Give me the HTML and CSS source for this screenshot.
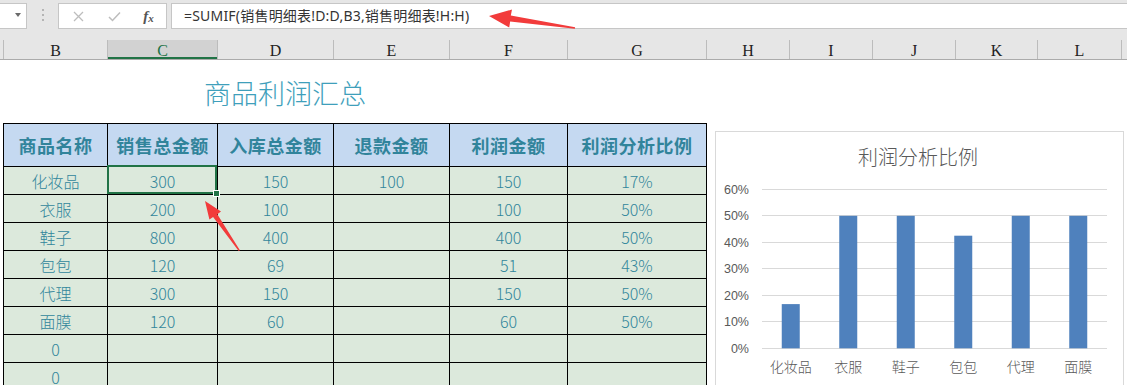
FILE: index.html
```html
<!DOCTYPE html>
<html lang="zh">
<head>
<meta charset="utf-8">
<title>商品利润汇总</title>
<link rel="stylesheet" href="styles.css">
</head>
<body>
<div class="app">
  <div class="fbar">
    <div class="namebox"><span class="caret"></span></div>
    <div class="grip">
      <svg width="4" height="14" viewBox="0 0 4 14"><rect x="1" y="1" width="2" height="2" fill="#b4b4b4"/><rect x="1" y="6" width="2" height="2" fill="#b4b4b4"/><rect x="1" y="11" width="2" height="2" fill="#b4b4b4"/></svg>
    </div>
    <div class="fbtns">
      <span class="fbtn"><svg width="11" height="11" viewBox="0 0 11 11"><path d="M1 1L10 10M10 1L1 10" stroke="#bdbdbd" stroke-width="1.3" fill="none"/></svg></span>
      <span class="fbtn"><svg width="13" height="11" viewBox="0 0 13 11"><path d="M1 6L4.5 9.5L12 1.5" stroke="#bdbdbd" stroke-width="1.5" fill="none"/></svg></span>
      <span class="fbtn fx"><i>f</i><span class="fxx">x</span></span>
    </div>
    <div class="finput">=SUMIF(销售明细表!D:D,B3,销售明细表!H:H)</div>
  </div>

  <div class="colhdr">
    <div class="ch ch0"></div>
    <div class="ch">B</div>
    <div class="ch active">C</div>
    <div class="ch">D</div>
    <div class="ch">E</div>
    <div class="ch">F</div>
    <div class="ch">G</div>
    <div class="ch">H</div>
    <div class="ch">I</div>
    <div class="ch">J</div>
    <div class="ch">K</div>
    <div class="ch">L</div>
    <div class="ch"></div>
  </div>

  <div class="sheet">
    <div class="titlerow"><div class="title">商品利润汇总</div></div>
    <div class="content">
      <table class="summary">
        <colgroup>
          <col class="cb"><col class="cc"><col class="cd"><col class="ce"><col class="cf"><col class="cg">
        </colgroup>
        <tr class="hrow"><th>商品名称</th><th>销售总金额</th><th>入库总金额</th><th>退款金额</th><th>利润金额</th><th>利润分析比例</th></tr>
        <tr class="drow"><td>化妆品</td><td class="sel">300</td><td>150</td><td>100</td><td>150</td><td>17%</td></tr>
        <tr class="drow"><td>衣服</td><td>200</td><td>100</td><td></td><td>100</td><td>50%</td></tr>
        <tr class="drow"><td>鞋子</td><td>800</td><td>400</td><td></td><td>400</td><td>50%</td></tr>
        <tr class="drow"><td>包包</td><td>120</td><td>69</td><td></td><td>51</td><td>43%</td></tr>
        <tr class="drow"><td>代理</td><td>300</td><td>150</td><td></td><td>150</td><td>50%</td></tr>
        <tr class="drow"><td>面膜</td><td>120</td><td>60</td><td></td><td>60</td><td>50%</td></tr>
        <tr class="drow"><td>0</td><td></td><td></td><td></td><td></td><td></td></tr>
        <tr class="drow"><td>0</td><td></td><td></td><td></td><td></td><td></td></tr>
      </table>

      <div class="chart">
        <svg width="407" height="268" viewBox="0 0 407 268">
          <text class="ctitle" x="202" y="33" text-anchor="middle">利润分析比例</text>
          <g class="grid">
            <line x1="46" x2="391" y1="57.5" y2="57.5"/>
            <line x1="46" x2="391" y1="83.5" y2="83.5"/>
            <line x1="46" x2="391" y1="110.5" y2="110.5"/>
            <line x1="46" x2="391" y1="136.5" y2="136.5"/>
            <line x1="46" x2="391" y1="163.5" y2="163.5"/>
            <line x1="46" x2="391" y1="189.5" y2="189.5"/>
            <line x1="46" x2="391" y1="216.5" y2="216.5"/>
          </g>
          <g class="ylab">
            <text x="33" y="62">60%</text>
            <text x="33" y="88">50%</text>
            <text x="33" y="115">40%</text>
            <text x="33" y="141">30%</text>
            <text x="33" y="168">20%</text>
            <text x="33" y="194">10%</text>
            <text x="33" y="221">0%</text>
          </g>
          <g class="bars">
            <rect x="65.75" y="172.1" width="18" height="44.2"/>
            <rect x="123.25" y="83.8" width="18" height="132.5"/>
            <rect x="180.75" y="83.8" width="18" height="132.5"/>
            <rect x="238.25" y="103.7" width="18" height="112.6"/>
            <rect x="295.75" y="83.8" width="18" height="132.5"/>
            <rect x="353.25" y="83.8" width="18" height="132.5"/>
          </g>
          <g class="xlab">
            <text x="74.75" y="240">化妆品</text>
            <text x="132.25" y="240">衣服</text>
            <text x="189.75" y="240">鞋子</text>
            <text x="247.25" y="240">包包</text>
            <text x="304.75" y="240">代理</text>
            <text x="362.25" y="240">面膜</text>
          </g>
        </svg>
      </div>
    </div>
  </div>

  <svg class="arrows" width="1127" height="385" viewBox="0 0 1127 385">
    <polygon points="489,16 512,9.5 510.8,15.6 575.1,27.3 574.9,28.7 510.2,21.6 509.2,27.5" fill="#f23b3b"/>
    <polygon points="205,201 221,211.6 217.3,214.2 239.9,250.3 238.7,251.1 213.1,217 209.4,219.6" fill="#f23b3b"/>
  </svg>
</div>
</body>
</html>
```

FILE: styles.css
```css
body {
  margin: 0;
}

.app {
  position: relative;
  width: 1127px;
  height: 385px;
  overflow: hidden;
  background: #ffffff;
  font-family: "Noto Sans", "Noto Sans CJK SC", sans-serif;
}

/* formula bar */
.fbar {
  height: 40px;
  box-sizing: border-box;
  padding-top: 3px;
  background: #e6e6e6;
  display: flex;
  align-items: flex-start;
}

.namebox {
  width: 27px;
  height: 26px;
  box-sizing: border-box;
  background: #ffffff;
  border: 1px solid #c6c6c6;
  border-left: none;
  display: flex;
  align-items: center;
  justify-content: flex-end;
  padding-right: 5px;
}

.caret {
  width: 0;
  height: 0;
  border-left: 3.5px solid transparent;
  border-right: 3.5px solid transparent;
  border-top: 4px solid #6a6a6a;
  margin-top: -2px;
}

.grip {
  width: 31px;
  height: 26px;
  display: flex;
  align-items: center;
  justify-content: center;
  padding-bottom: 3px;
  box-sizing: border-box;
}

.fbtns {
  width: 109px;
  height: 26px;
  box-sizing: border-box;
  background: #ffffff;
  border: 1px solid #c6c6c6;
  display: grid;
  grid-template-columns: 38px 34px 35px;
  align-items: center;
}

.fbtn {
  display: flex;
  justify-content: center;
  align-items: center;
  height: 24px;
}

.fx {
  font-family: "Liberation Serif", serif;
  color: #555555;
  font-size: 15px;
  font-weight: bold;
}

.fx i {
  font-style: italic;
}

.fxx {
  font-size: 11px;
  font-style: italic;
  margin-top: 3px;
}

.finput {
  flex: 1;
  margin-left: 4px;
  height: 26px;
  box-sizing: border-box;
  background: #ffffff;
  border: 1px solid #c6c6c6;
  border-right: none;
  padding-left: 12px;
  font-size: 14px;
  line-height: 23px;
  color: #333333;
  letter-spacing: 0.2px;
  white-space: nowrap;
}

/* column headers */
.colhdr {
  display: grid;
  grid-template-columns: 3px 104px 110px 116px 116px 118px 139px 83px 83px 83px 82px 84px 1fr;
  height: 20px;
  box-sizing: border-box;
  background: #e6e6e6;
  border-bottom: 1px solid #ababab;
}

.ch {
  border-left: 1px solid #bcbcbc;
  text-align: center;
  font-family: "Liberation Serif", serif;
  font-size: 16px;
  line-height: 22px;
  color: #222222;
  height: 19px;
  overflow: hidden;
}

.ch0 {
  border-left: none;
}

.ch.active {
  background: #d2d2d2;
  color: #217346;
  box-shadow: inset 0 -2px 0 #217346;
}

/* sheet */
.titlerow {
  height: 63px;
}

.title {
  margin-left: 3px;
  width: 564px;
  text-align: center;
  font-family: "Noto Sans CJK SC", sans-serif;
  font-size: 27px;
  font-weight: 300;
  line-height: 66px;
  color: #3f9fbb;
}

.content {
  display: flex;
  align-items: flex-start;
}

.summary {
  border-collapse: separate;
  border-spacing: 0;
  table-layout: fixed;
  width: 704px;
  margin-left: 3px;
  border-left: 1px solid #000000;
  border-top: 1px solid #000000;
  flex: none;
}

.cb { width: 104px; }
.cc { width: 110px; }
.cd { width: 116px; }
.ce { width: 116px; }
.cf { width: 118px; }
.cg { width: 139px; }

.summary th,
.summary td {
  border-right: 1px solid #000000;
  border-bottom: 1px solid #000000;
  padding: 0;
  text-align: center;
  font-family: "Noto Sans CJK SC", sans-serif;
  color: #31869b;
  white-space: nowrap;
}

.hrow {
  height: 43px;
}

.hrow th {
  background: #c5d9f1;
  font-size: 18px;
  font-weight: bold;
  color: #31849b;
  letter-spacing: 0.5px;
}

.drow {
  height: 28px;
}

.drow td {
  background: #dce9dc;
  font-size: 16px;
  font-weight: 300;
  line-height: 20px;
}

.summary td.sel {
  position: relative;
}

.summary td.sel::before {
  content: "";
  position: absolute;
  left: -1px;
  top: -2px;
  right: 0;
  bottom: 0;
  border: 2px solid #217346;
}

.summary td.sel::after {
  content: "";
  position: absolute;
  right: -3px;
  bottom: -3px;
  width: 5px;
  height: 5px;
  background: #217346;
  border: 1px solid #ffffff;
}

/* chart */
.chart {
  flex: none;
  margin-left: 8px;
  margin-top: 8px;
  width: 409px;
  height: 270px;
  box-sizing: border-box;
  border: 1px solid #d9d9d9;
  background: #ffffff;
}

.chart svg {
  display: block;
}

.ctitle {
  font-family: "Noto Sans CJK SC", sans-serif;
  font-size: 20px;
  font-weight: 300;
  fill: #595959;
}

.grid line {
  stroke: #d9d9d9;
  stroke-width: 1;
}

.ylab text {
  font-family: "Liberation Sans", sans-serif;
  font-size: 12.5px;
  fill: #595959;
  text-anchor: end;
}

.bars rect {
  fill: #4f81bd;
}

.xlab text {
  font-family: "Noto Sans CJK SC", sans-serif;
  font-size: 14px;
  font-weight: 300;
  fill: #595959;
  text-anchor: middle;
}

/* annotation arrows */
.arrows {
  position: absolute;
  left: 0;
  top: 0;
  pointer-events: none;
}
```
